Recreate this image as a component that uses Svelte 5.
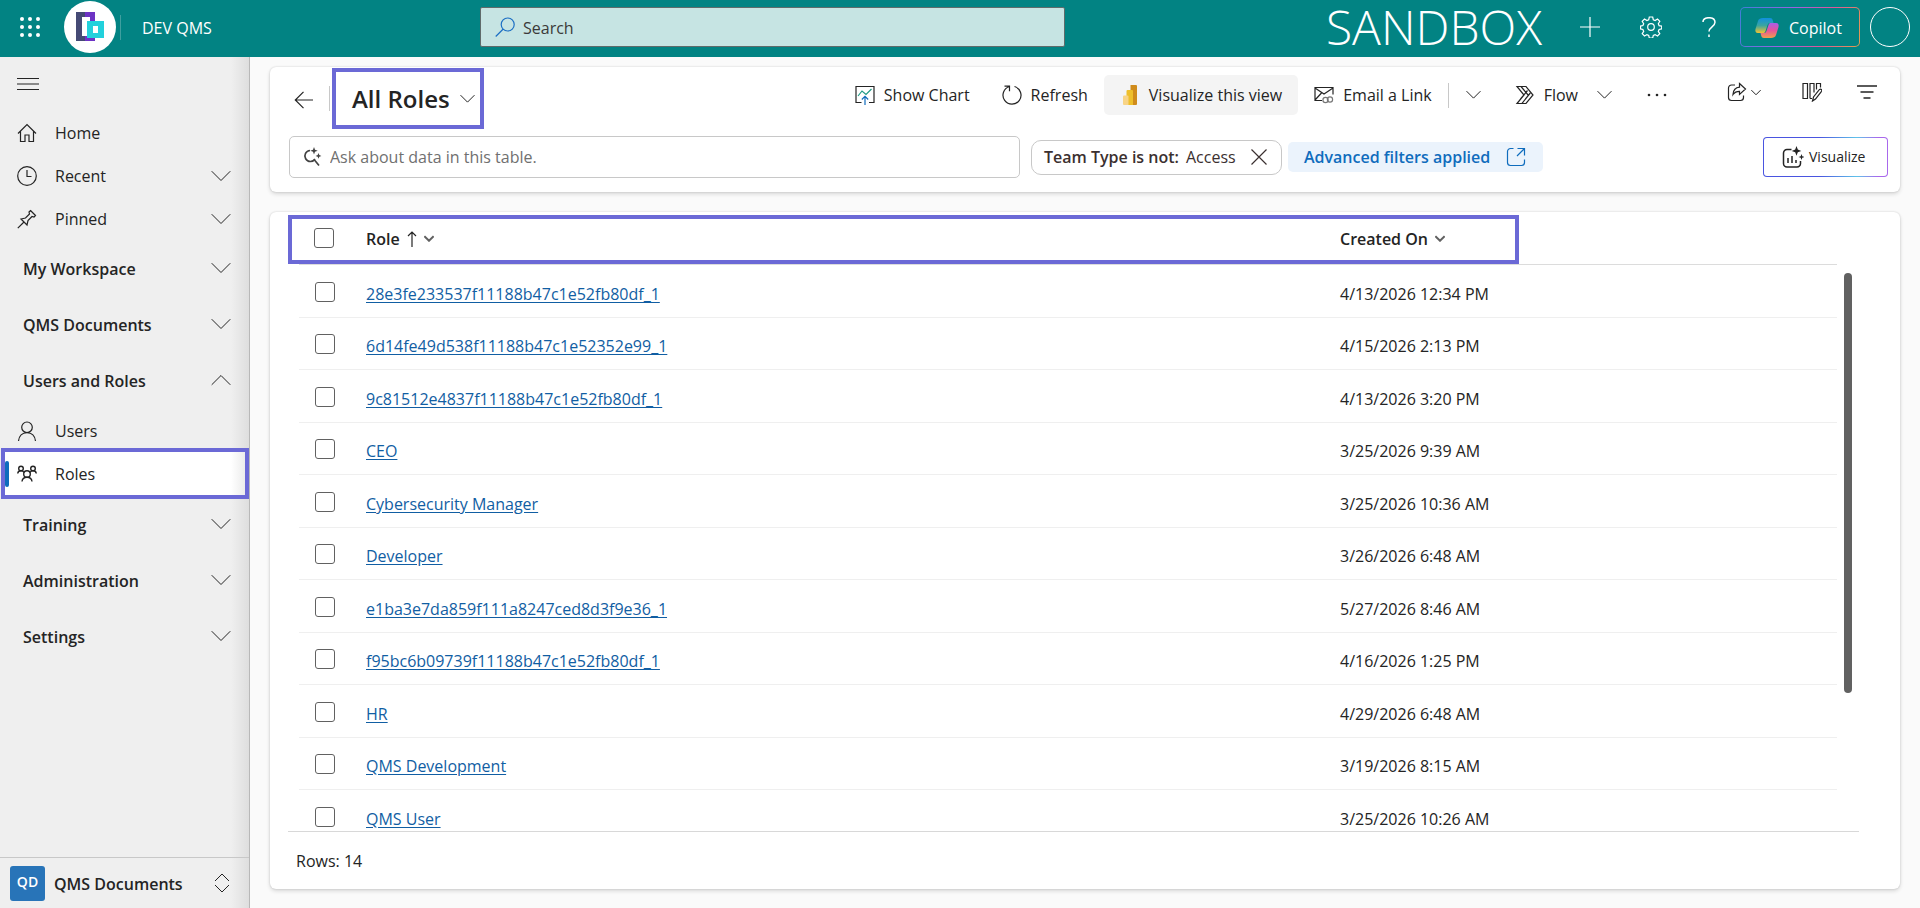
<script lang="ts">
  type Entry = { label: string; icon: string; expandable?: boolean; active?: boolean };
  type Group = { label: string; open: boolean; items: Entry[] };
  type Role = { name: string; createdOn: string };

  const shortcuts: Entry[] = [
    { label: "Home", icon: "home" },
    { label: "Recent", icon: "clock", expandable: true },
    { label: "Pinned", icon: "pin", expandable: true },
  ];

  let groups: Group[] = $state([
    { label: "My Workspace", open: false, items: [] },
    { label: "QMS Documents", open: false, items: [] },
    {
      label: "Users and Roles",
      open: true,
      items: [
        { label: "Users", icon: "user" },
        { label: "Roles", icon: "people", active: true },
      ],
    },
    { label: "Training", open: false, items: [] },
    { label: "Administration", open: false, items: [] },
    { label: "Settings", open: false, items: [] },
  ]);

  const roles: Role[] = [
    { name: "28e3fe233537f11188b47c1e52fb80df_1", createdOn: "4/13/2026 12:34 PM" },
    { name: "6d14fe49d538f11188b47c1e52352e99_1", createdOn: "4/15/2026 2:13 PM" },
    { name: "9c81512e4837f11188b47c1e52fb80df_1", createdOn: "4/13/2026 3:20 PM" },
    { name: "CEO", createdOn: "3/25/2026 9:39 AM" },
    { name: "Cybersecurity Manager", createdOn: "3/25/2026 10:36 AM" },
    { name: "Developer", createdOn: "3/26/2026 6:48 AM" },
    { name: "e1ba3e7da859f111a8247ced8d3f9e36_1", createdOn: "5/27/2026 8:46 AM" },
    { name: "f95bc6b09739f11188b47c1e52fb80df_1", createdOn: "4/16/2026 1:25 PM" },
    { name: "HR", createdOn: "4/29/2026 6:48 AM" },
    { name: "QMS Development", createdOn: "3/19/2026 8:15 AM" },
    { name: "QMS User", createdOn: "3/25/2026 10:26 AM" },
  ];
  const total = 14;

  let selected: boolean[] = $state(roles.map(() => false));

  const toggleAll = (e: Event) => {
    const checked = (e.currentTarget as HTMLInputElement).checked;
    selected = selected.map(() => checked);
  };

  // stroke paths on a 20x20 grid
  const paths: Record<string, string> = {
    home: "M1 10.5 10 1.5l9 9M3.5 8.5v10h4.5v-6.5h4v6.5h4.5v-10",
    clock: "M10 .7a9.3 9.3 0 1 0 0 18.6A9.3 9.3 0 0 0 10 .7zM10 4v6.5h4.5",
    pin: "M.8 19.2 7 13M4 10l6 6 1-4.5 4-4 2 .5 1.5-1.5-5-5L12 3l.5 2-4 4zM13.5 1.5l5 5",
    user: "M10 1a5.3 5.3 0 1 0 0 10.6A5.3 5.3 0 0 0 10 1zM1.5 20c.5-5 3.7-8.4 8.5-8.4s8 3.4 8.5 8.4",
    back: "M19 10H1.5M9.5 1.8 1.3 10l8.2 8.2",
    refresh: "M12.5 1.5a9 9 0 1 1-5 0M2.5 1.2h5v5",
    plus: "M10 0v20M0 10h20",
    close: "M2.5 2.5l15 15M17.5 2.5l-15 15",
    open: "M7.5 1.5h-3a3 3 0 0 0-3 3v11a3 3 0 0 0 3 3h11a3 3 0 0 0 3-3v-3M11.5 1.5h7v7M18.5 1.5 11 9",
    search: "M12.7 1a6.5 6.5 0 1 0 0 13 6.5 6.5 0 0 0 0-13zM8 12.3.7 19.5",
    share: "M8 3H4.5a3 3 0 0 0-3 3v9.5a3 3 0 0 0 3 3h9a3 3 0 0 0 3-3v-2M12.5 1.5l6 5.5-6 5.5V9.3c-3 0-5 1-6.5 3.2.3-4.2 2.5-7 6.5-7.3z",
    flow: "M2 1.5h9l7 8.5-7 8.5H2l7-8.5zM6 1.5l7.5 9M5.5 14l7-8.5M7 18.3 15.3 8",
  };
</script>

{#snippet icon(name: string, size = 20)}
  <svg class="icon" width={size} height={size} viewBox="0 0 20 20" aria-hidden="true">
    {#if name === "people"}
      <g stroke-width="1.4">
        <circle cx="10" cy="10" r="3.3" />
        <circle cx="4" cy="4.5" r="2.3" />
        <circle cx="16" cy="4.5" r="2.3" />
        <path d="M5 17.5c.3-2.700 2-4.200 5-4.200s4.700 1.500 5 4.200M.7 9.500C1 7.500 2.200 6.800 4 6.800c1.500 0 2.500.7 3 1.700M19.300 9.500c-.3-2-1.500-2.700-3.300-2.700-1.500 0-2.500.7-3 1.700" />
      </g>
    {:else}
      <path d={paths[name]} />
    {/if}
  </svg>
{/snippet}

{#snippet chevron(width = 20, up = false)}
  <svg class="icon chevron" class:up {width} height={width / 2 + 2} viewBox="0 0 20 12" aria-hidden="true">
    <path d="M.7 1.2 10 10.5l9.3-9.3" vector-effect="non-scaling-stroke" />
  </svg>
{/snippet}

<div class="app">
  <header class="topbar">
    <div class="brand">
      <button class="plain" aria-label="App launcher">
        <svg width="20" height="20" viewBox="0 0 20 20" fill="#fff">
          {#each [2, 10, 18] as cy}
            {#each [2, 10, 18] as cx}
              <circle {cx} {cy} r="2" />
            {/each}
          {/each}
        </svg>
      </button>
      <svg class="logo" width="52" height="52" viewBox="0 0 52 52" aria-hidden="true">
        <circle cx="26" cy="26" r="26" fill="#fff" />
        <path d="M12 11h10v5h-4v19h4v5H12z" fill="#454a75" />
        <path d="M21 11h10v9h-5v-4h-5zM21 35h5v2h5v3H21z" fill="#6d33c4" />
        <path d="M23 20h17v17H23zM29 25v7h5v-7z" fill="#22d1dc" fill-rule="evenodd" />
      </svg>
      <span class="brand-line"></span>
      <a class="env" href="#home">DEV QMS</a>
    </div>

    <label class="search">
      {@render icon("search")}
      <input type="search" placeholder="Search" aria-label="Search" />
    </label>

    <div class="tools">
      <span class="sandbox">SANDBOX</span>
      <button class="plain" aria-label="New">{@render icon("plus")}</button>
      <button class="plain" aria-label="Settings">
        <svg class="icon" width="22" height="22" viewBox="0 0 22 22">
          <circle cx="11" cy="11" r="3.3" />
          <path
            d="M9.300 1h3.400l.6 2.700 1.800.8 2.400-1.500 2.300 2.400-1.500 2.300.8 1.900 2.600.5v2.800l-2.600.6-.8 1.900 1.500 2.300-2.300 2.300-2.400-1.400-1.800.8-.6 2.600H9.300l-.6-2.600-1.800-.8L4.500 20l-2.300-2.300 1.500-2.300-.8-1.900L.5 12.900v-2.800l2.400-.5.8-1.900-1.500-2.300L4.500 3l2.400 1.500 1.800-.8z"
          />
        </svg>
      </button>
      <button class="plain" aria-label="Help">
        <svg class="icon help" width="14" height="20" viewBox="0 0 14 20">
          <path d="M1 5c0-2.500 2.400-4.300 6-4.300s6 1.900 6 4.600c0 4.400-6 4.700-6 9.200M7 17.500V20" />
        </svg>
      </button>
      <button class="copilot">
        <svg width="24" height="24" viewBox="0 0 24 22" aria-hidden="true">
          <defs>
            <linearGradient id="cool" x1="0" y1="0" x2="0" y2="1">
              <stop offset="0" stop-color="#0f8fe0" />
              <stop offset="0.5" stop-color="#3aa5a0" />
              <stop offset="1" stop-color="#f3c332" />
            </linearGradient>
            <linearGradient id="warm" x1="0" y1="0" x2="0" y2="1">
              <stop offset="0" stop-color="#a85fe8" />
              <stop offset="0.5" stop-color="#e8529a" />
              <stop offset="1" stop-color="#f0a04b" />
            </linearGradient>
          </defs>
          <path d="M8 1h7c2 0 2.500 1 3 3l.5 2H15c-1.500 0-2 .8-2.500 2l-2 6c-.5 1.500-1 2-2.500 2H3c-2.500 0-3-2-2.500-4L3 4c.8-2.200 2.500-3 5-3z" fill="url(#cool)" />
          <path d="M16 21H9c-2 0-2.500-1-3-3l-.5-2H9c1.500 0 2-.8 2.500-2l2-6c.5-1.500 1-2 2.500-2h5c2.500 0 3 2 2.500 4L21 18c-.8 2.200-2.500 3-5 3z" fill="url(#warm)" />
        </svg>
        Copilot
      </button>
      <button class="avatar" aria-label="Account"></button>
    </div>
  </header>

  <div class="body">
    <nav class="sidebar">
      <button class="plain burger" aria-label="Collapse navigation">
        <svg class="icon" width="22" height="12" viewBox="0 0 22 12">
          <path d="M0 .5h22M0 6h22M0 11.5h22" />
        </svg>
      </button>

      {#each shortcuts as item}
        <button class="nav-item">
          {@render icon(item.icon)}
          <span>{item.label}</span>
          {#if item.expandable}{@render chevron()}{/if}
        </button>
      {/each}

      {#each groups as group}
        <button class="nav-group" aria-expanded={group.open} onclick={() => (group.open = !group.open)}>
          <span>{group.label}</span>
          {@render chevron(20, group.open)}
        </button>
        {#if group.open && group.items.length}
          <div class="nav-list">
            {#each group.items as item}
              <a class="nav-item" class:active={item.active} href="#{item.label.toLowerCase()}">
                {@render icon(item.icon)}
                <span>{item.label}</span>
              </a>
            {/each}
          </div>
        {/if}
      {/each}

      <button class="area">
        <span class="badge">QD</span>
        <span class="area-name">QMS Documents</span>
        <svg class="icon chevron" width="16" height="20" viewBox="0 0 16 20">
          <path d="M1 8l7-7 7 7M1 12l7 7 7-7" />
        </svg>
      </button>
    </nav>

    <main>
      <section class="card commands">
        <div class="row">
          <button class="plain back" aria-label="Back">{@render icon("back")}</button>
          <span class="line"></span>
          <button class="view">
            All Roles
            {@render chevron(15)}
          </button>

          <div class="commandbar">
            <button class="cmd">
              <svg class="icon" width="20" height="20" viewBox="0 0 20 20">
                <path d="M6.5 17.5H1v-16h18v16h-5" />
                <path d="M3 11l4-5 4 3.5 5.5-5.5" stroke="#1f9a85" />
                <path d="M10 20v-8.500M6.800 14.500l3.200-3.200 3.200 3.200" stroke="#0f6cbd" />
              </svg>
              Show Chart
            </button>
            <button class="cmd">{@render icon("refresh")} Refresh</button>
            <button class="cmd filled">
              <svg width="20" height="20" viewBox="0 0 20 20">
                <path d="M10.500 0H16a1 1 0 0 1 1 1v18a1 1 0 0 1-1 1h-5.500z" fill="#d08c1b" />
                <path d="M7.500 5H12a1 1 0 0 1 1 1v14H6.500V6a1 1 0 0 1 1-1z" fill="#eebf2b" />
                <path d="M4 10.500h3.500a1 1 0 0 1 1 1V20H4a1 1 0 0 1-1-1v-7.500a1 1 0 0 1 1-1z" fill="#f8d486" />
              </svg>
              Visualize this view
            </button>
            <button class="cmd">
              <svg class="icon" width="20" height="20" viewBox="0 0 20 20">
                <path d="M8 15.5H1v-13h18v7M1 3l9 6 9-6M1 15l6.500-7" />
                <circle cx="11.5" cy="15" r="2.6" stroke="#777" />
                <circle cx="16" cy="14.5" r="2.6" stroke="#777" />
              </svg>
              Email a Link
            </button>
            <span class="line"></span>
            <button class="cmd" aria-label="More email options"><span class="slot">{@render chevron(15)}</span></button>
            <button class="cmd flow">
              {@render icon("flow")}
              Flow
              <span class="slot">{@render chevron(15)}</span>
            </button>
            <button class="cmd" aria-label="More commands">
              <svg width="24" height="20" viewBox="0 0 24 20" fill="#242424">
                <circle cx="4" cy="10" r="1.3" />
                <circle cx="12" cy="10" r="1.3" />
                <circle cx="20" cy="10" r="1.3" />
              </svg>
            </button>
          </div>

          <div class="viewtools">
            <button class="plain share" aria-label="Share">{@render icon("share")}{@render chevron(10)}</button>
            <button class="plain" aria-label="Edit columns">
              <svg class="icon" width="20" height="20" viewBox="0 0 20 20">
                <path d="M1 1.5h4.5v15H1zM8 16.5v-15h4v9M8 16.5h2M14.5 7.5v-6h4v4" />
                <path d="M10.5 19l1-4 6-7.5c1.5-1 3 .3 2 1.8l-6 7.7z" />
              </svg>
            </button>
            <button class="plain" aria-label="Edit filters">
              <svg class="icon thick" width="20" height="14" viewBox="0 0 20 14">
                <path d="M0 1h20M3.5 7h13M6.5 13h7" />
              </svg>
            </button>
          </div>
        </div>

        <div class="row filters">
          <label class="ask">
            <svg class="icon" width="20" height="20" viewBox="0 0 20 20">
              <path d="M8 3.500a5.500 5.500 0 1 0 5 8.500M12.500 13l4.500 5.500" stroke-width="1.700" />
              <path d="M12 0l1 2.700 2.700 1-2.700 1L12 7.400l-1-2.700-2.700-1 2.700-1zM16.500 6l.8 2.100 2.100.8-2.100.8-.8 2.100-.8-2.100-2.100-.8 2.100-.8z" fill="#424242" stroke="none" />
            </svg>
            <input type="text" placeholder="Ask about data in this table." aria-label="Ask about data in this table" />
          </label>
          <button class="pill">
            <b>Team Type is not:</b>
            <span>Access</span>
            {@render icon("close")}
          </button>
          <button class="advanced">Advanced filters applied {@render icon("open")}</button>
          <button class="visualize">
            <svg class="icon" width="22" height="22" viewBox="0 0 22 22">
              <path d="M9.500 3.500H5a3.500 3.500 0 0 0-3.500 3.500v10.500A3.500 3.500 0 0 0 5 21h10a3.500 3.500 0 0 0 3.500-3.500V15M6 12v5M10 10v7M14 14v3" stroke-width="1.500" />
              <path d="M14.500 0l1.300 3.500L19.300 5l-3.500 1.300-1.300 3.500-1.300-3.500L9.700 5l3.500-1.500zM19.500 8l.8 2.200 2.200.8-2.200.8-.8 2.200-.8-2.200-2.200-.8 2.200-.8z" fill="#242424" stroke="none" />
            </svg>
            Visualize
          </button>
        </div>
      </section>

      <section class="card grid">
        <div class="viewport">
          <table>
            <thead>
              <tr>
                <th class="check"><input type="checkbox" aria-label="Select all rows" onchange={toggleAll} /></th>
                <th>
                  <button class="sort">
                    Role
                    <svg class="icon" width="10" height="16" viewBox="0 0 10 16"><path d="M5 16V1.5M1 5l4-4 4 4" /></svg>
                    <span class="caret">{@render chevron(10)}</span>
                  </button>
                </th>
                <th class="date">
                  <button class="sort">Created On <span class="caret">{@render chevron(10)}</span></button>
                </th>
              </tr>
            </thead>
            <tbody>
              {#each roles as role, i}
                <tr>
                  <td class="check"><input type="checkbox" aria-label="Select {role.name}" bind:checked={selected[i]} /></td>
                  <td><a href="#{role.name}">{role.name}</a></td>
                  <td class="date">{role.createdOn}</td>
                </tr>
              {/each}
            </tbody>
          </table>
          <span class="marker"></span>
          <span class="thumb"></span>
        </div>
        <footer>Rows: {total}</footer>
      </section>
    </main>
  </div>
</div>

<style>
  :global(body) {
    margin: 0;
  }
  .app {
    --mark: #6b69d6;
    display: flex;
    flex-direction: column;
    height: 100vh;
    font-family: "Open Sans", "Noto Sans", sans-serif;
    font-size: 16px;
    line-height: 24px;
    color: #242424;
    background: #fafafa;
    white-space: nowrap;
  }
  .app * {
    box-sizing: border-box;
  }
  button,
  input {
    font: inherit;
    color: inherit;
  }
  button {
    display: flex;
    align-items: center;
    padding: 0;
    border: 0;
    background: none;
    cursor: pointer;
  }
  svg {
    flex: none;
    display: block;
  }
  .icon {
    fill: none;
    stroke: currentColor;
    stroke-width: 1.2;
  }
  .chevron {
    stroke-width: 1;
  }
  .up {
    transform: scaleY(-1);
  }
  .thick {
    stroke-width: 1.6;
  }

  /* top bar */
  .topbar {
    display: flex;
    align-items: center;
    flex: none;
    height: 57px;
    padding-bottom: 3px;
    color: #fff;
    background: #028383;
  }
  .brand {
    display: flex;
    align-items: center;
    width: 25%;
    padding-left: 20px;
  }
  .logo {
    margin-left: 24px;
  }
  .brand-line {
    width: 1px;
    height: 25px;
    margin-left: 4px;
    background: #3f9f9f;
  }
  .env {
    margin-left: 21px;
    padding-top: 2px;
    color: #fff;
    text-decoration: none;
  }
  .search {
    display: flex;
    align-items: center;
    gap: 8px;
    width: 585px;
    height: 40px;
    padding: 0 14px;
    border: 1px solid #5f6b6b;
    border-radius: 2px;
    color: #1c6fc4;
    background: #c6e4e3;
  }
  .search input,
  .ask input {
    flex: 1;
    min-width: 0;
    padding: 0;
    border: 0;
    outline: 0;
    background: none;
  }
  .search input {
    padding-top: 2px;
  }
  .search input::placeholder {
    color: #3b3a39;
    opacity: 1;
  }
  .tools {
    display: flex;
    align-items: center;
    margin-left: auto;
    padding-right: 10px;
  }
  .sandbox {
    margin-right: 38px;
    font-size: 48px;
    font-weight: 300;
    line-height: 52px;
  }
  .tools .plain {
    margin-right: 40px;
  }
  .tools .plain:nth-of-type(3) {
    margin-right: 24px;
  }
  .help {
    stroke-width: 1.5;
  }
  .copilot {
    gap: 10px;
    width: 120px;
    height: 40px;
    padding: 2px 0 0 14px;
    border: 1px solid transparent;
    border-radius: 5px;
    background:
      linear-gradient(#028383, #028383) padding-box,
      linear-gradient(110deg, #3f7fd8, #9a62e0 40%, #e0559c 70%, #e0a04c) border-box;
  }
  .avatar {
    width: 40px;
    height: 40px;
    margin-left: 10px;
    border: 1px solid #fff;
    border-radius: 50%;
  }

  /* navigation */
  .body {
    display: flex;
    flex: 1;
    min-height: 0;
  }
  .sidebar {
    display: flex;
    flex-direction: column;
    flex: none;
    width: 250px;
    border-right: 1px solid #b8b8b8;
    background: linear-gradient(to left, #dedede, #efefef 18px);
  }
  .burger {
    height: 54px;
    padding-left: 17px;
  }
  .nav-item {
    display: flex;
    align-items: center;
    flex: none;
    gap: 18px;
    height: 43px;
    padding: 0 18px 0 17px;
    color: inherit;
    text-decoration: none;
  }
  .nav-item span,
  .nav-group span,
  .area-name {
    flex: 1;
    text-align: left;
  }
  .nav-group {
    flex: none;
    height: 56px;
    padding: 0 18px 0 23px;
    font-weight: 600;
  }
  .nav-group span,
  .area-name {
    padding-top: 2px;
  }
  .nav-list {
    padding: 1px 0;
  }
  .active {
    position: relative;
    margin: 0 4px 0 5px;
    padding-left: 12px;
    outline: 4px solid var(--mark);
    background: linear-gradient(to left, #ececec, #fff 14px);
  }
  .active::before {
    content: "";
    position: absolute;
    left: 0;
    width: 4px;
    height: 26px;
    border-radius: 2px;
    background: #0f6cbd;
  }
  .area {
    height: 51px;
    margin-top: auto;
    padding: 0 19px 0 10px;
    border-top: 1px solid #c8c8c8;
    font-weight: 600;
  }
  .badge {
    width: 35px;
    height: 35px;
    margin-right: 9px;
    border-radius: 3px;
    font-size: 14px;
    line-height: 32px;
    color: #fff;
    background: #2874b8;
  }

  /* command card */
  main {
    display: flex;
    flex-direction: column;
    flex: 1;
    gap: 20px;
    min-width: 0;
    padding: 10px 20px 19px;
  }
  .card {
    border-radius: 6px;
    background: #fff;
    box-shadow:
      0 0 2px rgba(0, 0, 0, 0.16),
      0 2px 4px rgba(0, 0, 0, 0.14);
  }
  .commands {
    flex: none;
    padding-bottom: 14px;
  }
  .row {
    display: flex;
    align-items: center;
  }
  .back {
    margin: 4px 15px 0 24px;
  }
  .line {
    width: 1px;
    height: 25px;
    background: #c8c8c8;
  }
  .view {
    gap: 10px;
    width: 152px;
    height: 61px;
    margin: 1px 0 0 2px;
    padding-left: 16px;
    border: 4px solid var(--mark);
    font-size: 24px;
    font-weight: 600;
  }
  .commandbar {
    display: flex;
    align-items: center;
    margin: 0 42px 6px auto;
  }
  .cmd {
    gap: 9px;
    height: 40px;
    padding: 0 16px;
    border-radius: 5px;
  }
  .filled {
    background: #f4f4f4;
  }
  .slot {
    display: flex;
    justify-content: center;
    width: 18px;
  }
  .flow .slot {
    margin-left: 8px;
  }
  .viewtools {
    display: flex;
    align-items: center;
    gap: 35px;
    margin-bottom: 12px;
    padding-right: 23px;
  }
  .share {
    gap: 4px;
    margin-right: 6px;
  }
  .filters {
    padding: 7px 12px 0 19px;
  }
  .ask {
    display: flex;
    align-items: center;
    flex: 1;
    gap: 8px;
    height: 42px;
    padding: 0 12px;
    border: 1px solid #c8c8c8;
    border-radius: 5px;
    color: #424242;
  }
  .ask input::placeholder {
    color: #707070;
    opacity: 1;
  }
  .pill {
    gap: 7px;
    width: 251px;
    height: 35px;
    margin-left: 11px;
    padding: 0 12px;
    border: 1px solid #c8c8c8;
    border-radius: 10px;
    color: #3b3030;
  }
  .pill b {
    font-weight: 600;
  }
  .pill span {
    flex: 1;
    text-align: left;
  }
  .advanced {
    justify-content: space-between;
    width: 255px;
    height: 30px;
    margin-left: 6px;
    padding: 0 17px 0 16px;
    border-radius: 5px;
    font-weight: 600;
    color: #0f6cbd;
    background: #ebf3fc;
  }
  .visualize {
    gap: 5px;
    width: 125px;
    height: 40px;
    margin-left: 220px;
    padding-left: 18px;
    border: 1px solid transparent;
    border-radius: 4px;
    font-size: 14px;
    background:
      linear-gradient(#fff, #fff) padding-box,
      linear-gradient(90deg, #4a55e0 45%, #5fc3ea 75%, #a868ec 92%) border-box;
  }

  /* grid card */
  .grid {
    display: flex;
    flex-direction: column;
    flex: 1;
    min-height: 0;
  }
  /* side padding leaves room for the marker and the scroll thumb */
  .viewport {
    position: relative;
    flex: 1;
    min-height: 0;
    margin: 0 41px 0 18px;
    padding: 0 22px 0 11px;
    border-bottom: 1px solid #d8d8d8;
    overflow: hidden;
  }
  table {
    width: 100%;
    border-collapse: collapse;
    table-layout: fixed;
  }
  th,
  td {
    height: 53px;
    padding: 6px 0 0;
    border-bottom: 1px solid #efefef;
    text-align: left;
  }
  tr:nth-child(even) td {
    height: 52px;
  }
  th {
    height: 52px;
    padding: 2px 0 0;
    border-bottom-color: #dcdcdc;
    font-weight: 600;
  }
  td.check {
    padding: 2px 0 0 16px;
  }
  th.check {
    padding: 1px 0 0 15px;
  }
  .check {
    width: 67px;
  }
  .date {
    width: 497px;
  }
  input[type="checkbox"] {
    appearance: none;
    display: block;
    width: 20px;
    height: 20px;
    margin: 0;
    border: 1px solid #616161;
    border-radius: 3px;
    background: #fff;
  }
  input[type="checkbox"]:checked {
    background: #0f6cbd;
  }
  td a {
    color: #115ea3;
    text-underline-offset: 2px;
  }
  .sort {
    gap: 7px;
    font-weight: 600;
  }
  .caret .icon {
    stroke-width: 2;
    color: #616161;
  }
  .marker {
    position: absolute;
    top: 3px;
    right: 340px;
    left: 0;
    height: 49px;
    border: 4px solid var(--mark);
    pointer-events: none;
  }
  .thumb {
    position: absolute;
    top: 61px;
    right: 7px;
    width: 8px;
    height: 420px;
    border-radius: 4px;
    background: #616161;
  }
  footer {
    flex: none;
    height: 57px;
    padding: 17px 26px 0;
  }
</style>
